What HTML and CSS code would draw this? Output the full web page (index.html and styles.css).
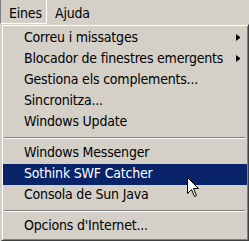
FILE: index.html
```html
<!DOCTYPE html>
<html lang="ca">
<head>
    <meta charset="UTF-8">
    <title>Eines</title>
    <link rel="stylesheet" href="styles.css">
</head>
<body>
    <div class="menubar">
        <div class="top open">Eines</div>
        <div class="top">Ajuda</div>
    </div>

    <div class="menu">
        <div class="item">Correu i missatges<span class="arrow"></span></div>
        <div class="item">Blocador de finestres emergents<span class="arrow"></span></div>
        <div class="item">Gestiona els complements...</div>
        <div class="item">Sincronitza...</div>
        <div class="item">Windows Update</div>
        <div class="sep"></div>
        <div class="item">Windows Messenger</div>
        <div class="item hover">Sothink SWF Catcher</div>
        <div class="item">Consola de Sun Java</div>
        <div class="sep"></div>
        <div class="item">Opcions d'Internet...</div>
    </div>

    <!-- punter del ratoli -->
    <svg class="cursor" width="13" height="21" viewBox="0 0 13 21">
        <polygon points="0.5,0.5 0.5,16.5 4.5,12.5 7.5,19.5 9.5,18.5 6.5,11.5 11.5,11.5" fill="#fff" stroke="#000" stroke-width="1" stroke-linejoin="miter"/>
    </svg>
</body>
</html>
```

FILE: styles.css
```css
body {
    margin: 0;
    width: 249px;
    height: 241px;
    overflow: hidden;
    position: relative;
    background: #d4d0c8;
    font-family: "DejaVu Sans Condensed", "Liberation Sans", sans-serif;
    font-size: 14px;
    letter-spacing: -0.2px;
    color: #000;
}

.menubar {
    display: flex;
    height: 24px;
}
.top {
    height: 24px;
    box-sizing: border-box;
    padding: 4px 7px 0 8px;
    line-height: 19px;
}
.top.open {
    width: 47px;
    border-left: 1px solid #808080;
    border-right: 1px solid #fff;
    border-bottom: 1px solid #fff;
    padding-left: 8px;
}

.menu {
    position: absolute;
    left: 1px;
    top: 24px;
    width: 248px;
    box-sizing: border-box;
    border: 1px solid;
    border-color: #d4d0c8 #404040 #404040 #d4d0c8;
    box-shadow: inset 1px 1px #fff, inset -1px -1px #808080;
    padding: 3px 1px 3px 1px;
}

.item {
    display: flex;
    align-items: center;
    height: 21px;
    line-height: 19px;
    padding-left: 21px;
    padding-bottom: 2px;
    box-sizing: border-box;
    white-space: nowrap;
}
.item.hover {
    background: #0a246a;
    color: #fff;
}
.arrow {
    margin-left: auto;
    margin-right: 7px;
    width: 0;
    height: 1px;
    border-left: 4px solid #000;
    border-top: 3px solid transparent;
    border-bottom: 3px solid transparent;
}

.sep {
    height: 2px;
    margin: 4px 2px 4px 1px;
    border-top: 1px solid #808080;
    border-bottom: 1px solid #fff;
    box-sizing: border-box;
}

.cursor {
    position: absolute;
    left: 187px;
    top: 177px;
}
```
